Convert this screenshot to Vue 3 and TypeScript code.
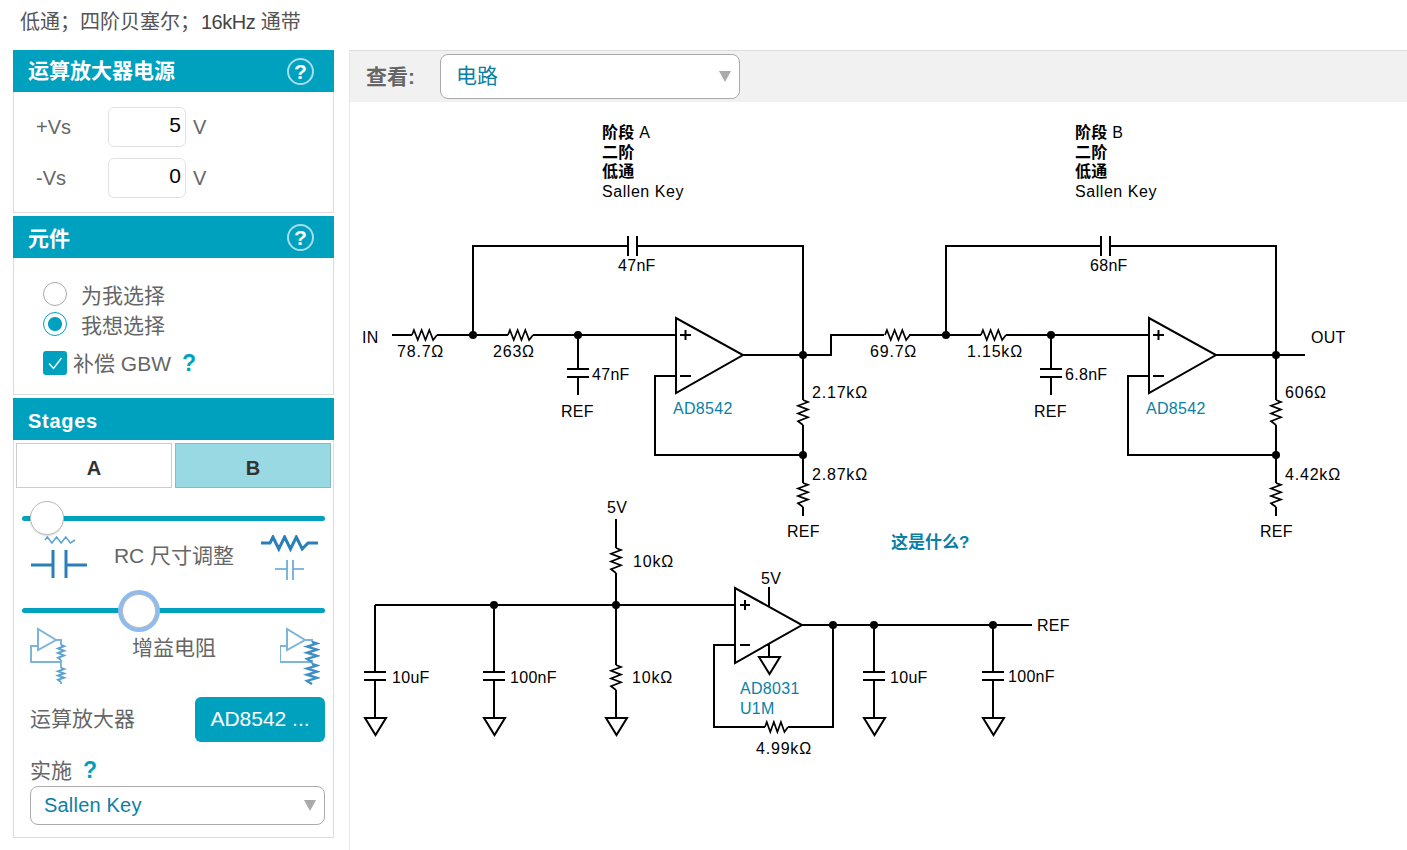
<template>
  <div class="page">
    <div class="summary">低通；四阶贝塞尔；<span class="summary-freq">16kHz</span> 通带</div>
    <div class="layout">
      <aside class="sidebar">
        <section class="panel">
          <header class="panel-head">
            <span class="head-title">运算放大器电源</span>
            <span class="help-ring">?</span>
          </header>
          <div class="panel-body supply">
            <div v-for="row in supplies" :key="row.label" class="supply-row">
              <span class="supply-label">{{ row.label }}</span>
              <input class="supply-input" :value="row.value" />
              <span class="supply-unit">V</span>
            </div>
          </div>
        </section>

        <section class="panel">
          <header class="panel-head">
            <span class="head-title-short">元件</span>
            <span class="help-ring">?</span>
          </header>
          <div class="panel-body parts">
            <div class="radio-row">
              <span class="radio"></span>
              <span>为我选择</span>
            </div>
            <div class="radio-row">
              <span class="radio radio-on"></span>
              <span>我想选择</span>
            </div>
            <div class="check-row">
              <span class="check">
                <svg viewBox="0 0 24 24" width="24" height="24">
                  <path d="M6 12.5L10.5 17.5L18.5 7" fill="none" stroke="#fff" stroke-width="1.3" />
                </svg>
              </span>
              <span class="check-text">补偿 GBW</span>
              <span class="help-plain">?</span>
            </div>
          </div>
        </section>

        <section class="panel">
          <header class="panel-head stages-head">
            <span>Stages</span>
          </header>
          <div class="panel-body stages">
            <div class="tabs">
              <div class="tab">A</div>
              <div class="tab tab-on">B</div>
            </div>

            <div class="slider slider-first">
              <span class="thumb" style="left: 8px"></span>
            </div>
            <div class="tune-row tune-rc">
              <svg class="tune-icon" width="60" height="45" viewBox="30 535 60 45">
                <path :d="hRes(45, 540, 30, 3)" fill="none" stroke="#5ca3d0" stroke-width="1.5" />
                <path d="M31 565H53M66 565H87M53 550V578M66 550V578" fill="none" stroke="#2b7fb8" stroke-width="3" />
              </svg>
              <span class="tune-label">RC 尺寸调整</span>
              <svg class="tune-icon" width="60" height="45" viewBox="260 535 60 45">
                <path :d="'M261 543H270' + hResTail(270, 543, 38, 6) + 'H318'" fill="none" stroke="#2b7fb8" stroke-width="3" />
                <path d="M275 569H287M293 569H304M287 560V582M293 560V582" fill="none" stroke="#5ca3d0" stroke-width="1.6" />
              </svg>
            </div>

            <div class="slider slider-second">
              <span class="thumb thumb-focus" style="left: 100px"></span>
            </div>
            <div class="tune-row tune-gain">
              <svg class="tune-icon" width="40" height="60" viewBox="30 625 40 60">
                <path d="M38 629V650L56 640ZM56 640H61V645M38 646H31V662H61M61 660V668M61 682V684" fill="none" stroke="#7db4da" stroke-width="2" />
                <path :d="vRes(61, 645, 15, 3)" fill="none" stroke="#5ca3d0" stroke-width="2" />
                <path :d="vRes(61, 668, 14, 3)" fill="none" stroke="#5ca3d0" stroke-width="2" />
              </svg>
              <span class="tune-label gain-label">增益电阻</span>
              <svg class="tune-icon" width="40" height="60" viewBox="280 625 40 60">
                <path d="M287 629V650L305 640ZM305 640H312V642M287 646H280V662H312M312 660V664" fill="none" stroke="#7db4da" stroke-width="2" />
                <path :d="vRes(312, 642, 20, 5)" fill="none" stroke="#3f8fc4" stroke-width="2.4" />
                <path :d="vRes(312, 664, 20, 5)" fill="none" stroke="#3f8fc4" stroke-width="2.4" />
              </svg>
            </div>

            <div class="amp-row">
              <span class="field-label amp-label">运算放大器</span>
              <button class="amp-btn">AD8542 ...</button>
            </div>
            <div class="impl-label">
              <span class="field-label impl-text">实施</span>
              <span class="help-plain">?</span>
            </div>
            <div class="dropdown impl-select">
              <span>Sallen Key</span>
              <i class="caret"></i>
            </div>
          </div>
        </section>
      </aside>

      <main class="main">
        <div class="toolbar">
          <span class="toolbar-label">查看:</span>
          <div class="dropdown view-select">
            <span class="view-text">电路</span>
            <i class="caret"></i>
          </div>
        </div>
        <svg class="schematic" width="1057" height="748" viewBox="350 102 1057 748">
          <path :d="wires" fill="none" stroke="#000" stroke-width="2" />
          <path :d="resistors" fill="none" stroke="#000" stroke-width="1.7" />
          <circle v-for="n in nodes" :key="n.join()" :cx="n[0]" :cy="n[1]" r="4" fill="#000" />
          <text
            v-for="t in labels"
            :key="t.s + t.x"
            :x="t.x"
            :y="t.y"
            :class="[t.c, { ohm: t.s.includes('Ω') }]"
          >{{ t.s }}</text>
          <g v-for="s in stageHeads" :key="s.x">
            <text :x="s.x" y="138"><tspan class="cjk-bold">阶段</tspan> {{ s.name }}</text>
            <text :x="s.x" y="158" class="cjk-bold">二阶</text>
            <text :x="s.x" y="177" class="cjk-bold">低通</text>
            <text :x="s.x" y="197" class="wide">Sallen Key</text>
          </g>
        </svg>
      </main>
    </div>
  </div>
</template>

<script setup lang="ts">
interface Label {
  s: string
  x: number
  y: number
  c?: string
}

const supplies = [
  { label: '+Vs', value: '5' },
  { label: '-Vs', value: '0' }
]

// zigzag from left to right, starts upward
const hResTail = (x: number, y: number, len: number, amp: number) => {
  const step = len / 6.5
  let d = ''
  for (let i = 0; i < 6; i++) {
    d += `L${x + step * (i + 0.5)} ${y + (i % 2 ? amp : -amp)}`
  }
  return d + `L${x + len} ${y}`
}
const hRes = (x: number, y: number, len: number, amp: number) => `M${x} ${y}` + hResTail(x, y, len, amp)

const vRes = (x: number, y: number, len: number, amp: number) => {
  const step = len / 6.5
  let d = `M${x} ${y}`
  for (let i = 0; i < 6; i++) {
    d += `L${x + (i % 2 ? -amp : amp)} ${y + step * (i + 0.5)}`
  }
  return d + `L${x} ${y + len}`
}

const opamp = (x: number, y: number) => `M${x} ${y}V${y + 75}L${x + 67} ${y + 37}Z`
const ground = (x: number, y: number) => `M${x - 10} ${y}H${x + 11}L${x + 0.5} ${y + 17}Z`
const capV = (x: number, y: number) => `M${x - 11} ${y}H${x + 11}M${x - 11} ${y + 8}H${x + 11}`

const stageWires = (dx: number) => {
  const X = (v: number) => v + dx
  return [
    `M${X(473)} 335V246H${X(628)}M${X(637)} 246H${X(803)}V400`,
    `M${X(628)} 236V256M${X(637)} 236V256`,
    `M${X(437)} 335H${X(508)}M${X(533)} 335H${X(676)}`,
    `M${X(578)} 335V369M${X(578)} 377V395`,
    capV(X(578), 369),
    opamp(X(676), 318),
    `M${X(743)} 355H${X(803)}`,
    `M${X(803)} 425V483M${X(803)} 507V516`,
    `M${X(676)} 376H${X(655)}V455H${X(803)}`,
    `M${X(680)} 335H${X(691)}M${X(685.5)} 330V340M${X(680)} 376H${X(691)}`
  ].join('')
}

const stageRes = (dx: number) =>
  [hRes(412 + dx, 335, 25, 5), hRes(508 + dx, 335, 25, 5), vRes(803 + dx, 400, 25, 5), vRes(803 + dx, 483, 24, 5)].join('')

const refWires = [
  'M616 519V548M616 573V665M616 690V718M375 605H735',
  'M375 605V672M375 680V718',
  'M494 605V672M494 680V718',
  capV(375, 672),
  capV(494, 672),
  ground(375, 718),
  ground(494, 718),
  ground(616, 718),
  opamp(735, 588),
  'M802 625H1032M769 587V606M769 644V657',
  ground(769, 657),
  'M735 645H714V727H765M788 727H833V625',
  'M874 625V672M874 680V718',
  'M993 625V672M993 680V718',
  capV(874, 672),
  capV(993, 672),
  ground(874, 718),
  ground(993, 718),
  'M740 605H750M745 600V610M740 645H750'
].join('')

const wires =
  stageWires(0) +
  stageWires(473) +
  'M392 335H412M803 355H831V335H884M909 335H946M1276 355H1305' +
  refWires

const resistors =
  stageRes(0) +
  stageRes(473) +
  vRes(616, 548, 25, 5) +
  vRes(616, 665, 25, 5) +
  hRes(765, 727, 23, 5)

const nodes = [
  [473, 335], [578, 335], [803, 355], [803, 455],
  [946, 335], [1051, 335], [1276, 355], [1276, 455],
  [494, 605], [616, 605], [833, 625], [874, 625], [993, 625]
]

const stageHeads = [
  { x: 602, name: 'A' },
  { x: 1075, name: 'B' }
]

const labels: Label[] = [
  { s: 'IN', x: 362, y: 343 },
  { s: '78.7Ω', x: 397, y: 357 },
  { s: '263Ω', x: 493, y: 357 },
  { s: '47nF', x: 618, y: 271 },
  { s: '47nF', x: 592, y: 380 },
  { s: 'REF', x: 561, y: 417 },
  { s: 'AD8542', x: 673, y: 414, c: 'part' },
  { s: '2.17kΩ', x: 812, y: 398 },
  { s: '2.87kΩ', x: 812, y: 480 },
  { s: 'REF', x: 787, y: 537 },
  { s: '69.7Ω', x: 870, y: 357 },
  { s: '1.15kΩ', x: 967, y: 357 },
  { s: '68nF', x: 1090, y: 271 },
  { s: '6.8nF', x: 1065, y: 380 },
  { s: 'REF', x: 1034, y: 417 },
  { s: 'AD8542', x: 1146, y: 414, c: 'part' },
  { s: 'OUT', x: 1311, y: 343 },
  { s: '606Ω', x: 1285, y: 398 },
  { s: '4.42kΩ', x: 1285, y: 480 },
  { s: 'REF', x: 1260, y: 537 },
  { s: '这是什么?', x: 891, y: 548, c: 'whatis' },
  { s: '5V', x: 607, y: 513 },
  { s: '10kΩ', x: 633, y: 567 },
  { s: '5V', x: 761, y: 584 },
  { s: '10uF', x: 392, y: 683 },
  { s: '100nF', x: 510, y: 683 },
  { s: '10kΩ', x: 632, y: 683 },
  { s: 'AD8031', x: 740, y: 694, c: 'part' },
  { s: 'U1M', x: 740, y: 714, c: 'part' },
  { s: '4.99kΩ', x: 756, y: 754 },
  { s: '10uF', x: 890, y: 683 },
  { s: '100nF', x: 1008, y: 682 },
  { s: 'REF', x: 1037, y: 631 }
]
</script>

<style>
body {
  margin: 0;
  background: #fff;
}
</style>

<style scoped>
.page {
  width: 1407px;
  height: 850px;
  overflow: hidden;
  font-family: "Liberation Sans", "Noto Sans CJK SC", sans-serif;
  color: #666;
}

.summary {
  height: 50px;
  box-sizing: border-box;
  padding: 10px 0 0 20px;
  font-size: 20px;
  line-height: 25px;
  color: #555;
}

.summary-freq {
  margin-left: 1px;
  letter-spacing: -0.5px;
  color: #444;
}

.layout {
  display: flex;
  align-items: flex-start;
  padding-left: 13px;
}

.sidebar {
  width: 321px;
  display: flex;
  flex-direction: column;
  gap: 3px;
}

.panel-head {
  height: 42px;
  background: #00a0bf;
  color: #fff;
  font-size: 21px;
  font-weight: 700;
  display: flex;
  align-items: center;
  justify-content: space-between;
  padding: 0 20px 0 15px;
}

.head-title {
  padding-bottom: 4px;
}

.head-title-short {
  padding-bottom: 1px;
}

.stages-head {
  font-size: 20px;
  letter-spacing: 0.7px;
  padding-top: 4px;
  box-sizing: border-box;
}

.help-ring {
  width: 23px;
  height: 23px;
  border: 2px solid rgba(255, 255, 255, 0.65);
  border-radius: 50%;
  font-size: 21px;
  line-height: 23px;
  text-align: center;
}

.panel-body {
  border: 1px solid #ddd;
  border-top: 0;
  box-sizing: border-box;
}

.supply {
  height: 121px;
  padding-top: 15px;
  display: flex;
  flex-direction: column;
  gap: 11px;
}

.supply-row {
  display: flex;
  align-items: center;
  font-size: 20px;
  padding-left: 22px;
}

.supply-label {
  width: 72px;
}

.supply-input {
  width: 78px;
  height: 40px;
  box-sizing: border-box;
  border: 1px solid #e2e2e2;
  border-radius: 6px;
  padding: 0 4px 4px 0;
  text-align: right;
  font: 21px "Liberation Sans", sans-serif;
  color: #000;
  outline: none;
}

.supply-unit {
  margin-left: 7px;
}

.parts {
  height: 137px;
  padding: 21px 0 0 29px;
  font-size: 21px;
}

.radio-row {
  height: 30px;
  display: flex;
  align-items: center;
  gap: 14px;
}

.radio {
  width: 24px;
  height: 24px;
  box-sizing: border-box;
  border: 1px solid #aaa;
  border-radius: 50%;
  background: #fff;
}

.radio-on {
  border-color: #00a0bf;
  background: radial-gradient(circle, #00a0bf 0 6.5px, #fff 7.5px);
}

.check-row {
  display: flex;
  align-items: center;
  margin-top: 12px;
  height: 24px;
}

.check {
  width: 24px;
  height: 24px;
  background: #00a0bf;
  border-radius: 3px;
  display: block;
}

.check svg {
  display: block;
}

.check-text {
  margin-left: 6px;
  margin-top: -2px;
}

.help-plain {
  width: 24px;
  margin-left: 6px;
  text-align: center;
  color: #00a0bf;
  font-weight: 700;
  font-size: 23px;
}

.stages {
  height: 398px;
  padding: 3px 2px 0;
  position: relative;
}

.tabs {
  display: flex;
  gap: 3px;
}

.tab {
  flex: 1;
  height: 45px;
  box-sizing: border-box;
  border: 1px solid #ccc;
  color: #333;
  font-size: 20px;
  font-weight: 700;
  line-height: 49px;
  text-align: center;
}

.tab-on {
  background: #99d9e4;
  border-color: #85bcc7;
}

.slider {
  position: relative;
  height: 5px;
  margin: 0 6px;
  background: #00a0bf;
  border-radius: 3px;
}

.slider-first {
  margin-top: 28px;
}

.slider-second {
  margin-top: 28px;
}

.thumb {
  position: absolute;
  top: -15px;
  width: 34px;
  height: 34px;
  box-sizing: border-box;
  border: 1px solid #bbb;
  border-radius: 50%;
  background: #fff;
  box-shadow: 0 1px 2px rgba(0, 0, 0, 0.15);
}

.thumb-focus {
  top: -14px;
  box-shadow: 0 0 0 4px #8fbcec;
}

.tune-row {
  display: flex;
  justify-content: space-between;
  margin: 14px 0 0 14px;
  padding-right: 11px;
}

.tune-rc {
  align-items: center;
}

.tune-gain {
  margin-top: 12px;
}

.tune-icon {
  display: block;
  flex-shrink: 0;
}

.tune-label {
  font-size: 21px;
  line-height: 26px;
  margin-right: 2px;
  margin-top: -4px;
}

.gain-label {
  margin-top: 10px;
  margin-right: 2px;
}

.amp-row {
  display: flex;
  align-items: center;
  justify-content: space-between;
  margin: 12px 6px 0 14px;
}

.field-label {
  font-size: 21px;
}

.amp-label {
  margin-bottom: 6px;
}

.amp-btn {
  width: 130px;
  height: 45px;
  border: 0;
  border-radius: 6px;
  background: #00a0bf;
  color: #fff;
  font: 21px "Liberation Sans", sans-serif;
  padding: 0 0 2px;
}

.impl-label {
  display: flex;
  align-items: center;
  height: 26px;
  margin: 15px 0 3px 14px;
}

.impl-text {
  margin-bottom: 3px;
}

.dropdown {
  position: relative;
  box-sizing: border-box;
  background: #fff;
  border: 1px solid #aaa;
  border-radius: 8px;
  color: #0a7fa6;
  display: flex;
  align-items: center;
}

.caret {
  position: absolute;
  width: 0;
  height: 0;
  border-left: 6px solid transparent;
  border-right: 6px solid transparent;
  border-top: 11px solid #aaa;
  right: 8px;
  top: 50%;
  margin-top: -6px;
}

.impl-select {
  height: 39px;
  margin: 0 6px 0 14px;
  padding-left: 13px;
  font-size: 20px;
  letter-spacing: 0.2px;
}

.main {
  flex: 1;
  margin-left: 15px;
  border-left: 1px solid #e6e6e6;
  height: 800px;
}

.toolbar {
  height: 52px;
  box-sizing: border-box;
  background: #f1f1f1;
  border-top: 1px solid #ddd;
  display: flex;
  align-items: center;
  padding-left: 16px;
}

.toolbar-label {
  width: 74px;
  padding-bottom: 4px;
  font-size: 21px;
  font-weight: 700;
  color: #666;
}

.view-select {
  width: 300px;
  height: 45px;
  padding-left: 15px;
  font-size: 21px;
}

.view-text {
  padding-bottom: 5px;
}

.schematic {
  display: block;
}

.schematic text {
  font-size: 16px;
  fill: #000;
  letter-spacing: 0.3px;
}

.schematic .ohm {
  letter-spacing: 0.8px;
}

.schematic .part {
  fill: #0a7fa6;
}

.schematic .whatis {
  fill: #0a7fa6;
  font-weight: 700;
  font-size: 17px;
  letter-spacing: 0;
}

.schematic .cjk-bold {
  font-weight: 700;
}

.schematic .wide {
  letter-spacing: 0.55px;
}
</style>
